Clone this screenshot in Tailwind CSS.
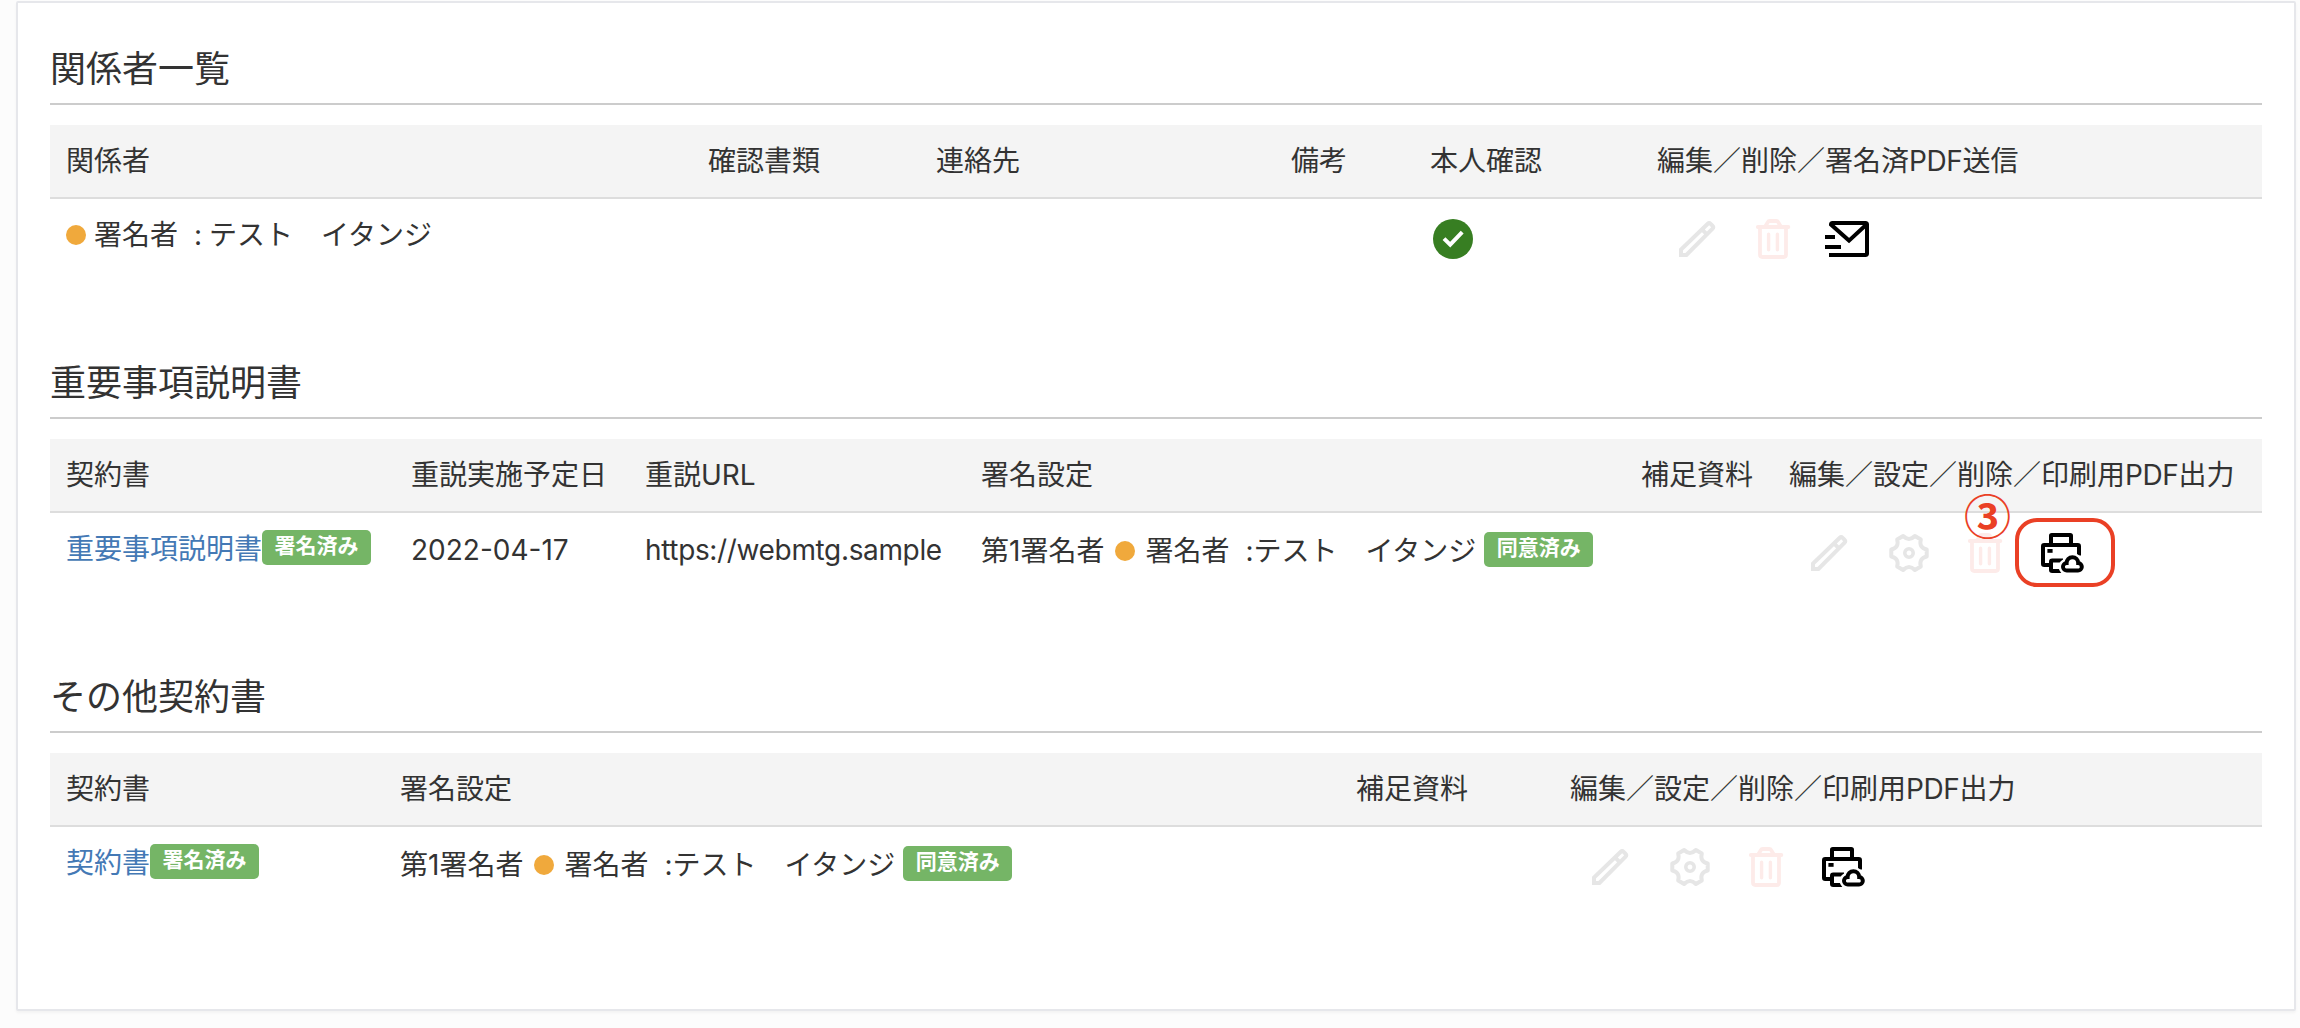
<!DOCTYPE html>
<html lang="ja">
<head>
<meta charset="utf-8">
<title>契約詳細</title>
<script src="https://cdn.jsdelivr.net/npm/@tailwindcss/browser@4"></script>
</head>
<body class="h-[1028px] overflow-hidden bg-[#fcfcfc] pl-4 pr-1 pt-px font-[Inter,'Noto_Sans_CJK_JP',sans-serif] text-[28px] leading-10 text-[#333]">
<svg class="hidden">
  <symbol id="pencil" viewBox="0 0 24 24"><path d="M4 20v-2.7L17.4 4.4q.7-.7 1.4 0l1 1q.7.7 0 1.4L6.7 20zM14.6 7.3l2.6 2.6" fill="none" stroke="currentColor" stroke-width="2"/></symbol>
  <symbol id="gear" viewBox="-12 -12 24 24"><g fill="none" stroke="currentColor" stroke-width="2" stroke-linejoin="round"><path d="M8.85 -1.72V1.72Q4.8 2.77 5.91 6.79L2.94 8.51Q0 5.54 -2.94 8.51L-5.91 6.79Q-4.8 2.77 -8.85 1.72V-1.72Q-4.8 -2.77 -5.91 -6.79L-2.94 -8.51Q0 -5.54 2.94 -8.51L5.91 -6.79Q4.8 -2.77 8.85 -1.72Z"/><circle r="2.1" stroke-width="1.8"/></g></symbol>
  <symbol id="trash" viewBox="0 0 24 24"><g fill="none" stroke="currentColor" stroke-width="1.9" stroke-linecap="round" stroke-linejoin="round"><path d="M4.4 6h15.3M8.2 5.6l1.2-2q.3-.6 1-.6h3.2q.7 0 1 .6l1.2 2M5.5 6.5v13.3q0 1.2 1.2 1.2h10.6q1.2 0 1.2-1.2V6.5"/><path d="M9.8 9.6v7.8M14.2 9.6v7.8" stroke-width="1.7"/></g></symbol>
  <symbol id="mail" viewBox="0 0 24 24"><path d="M3 20h18.2q.8 0 .8-.8V4.8q0-.8-.8-.8H4.8Q4 4 4 4.8L13 12.8 21.6 4.9M1 11h5M1 16h8" fill="none" stroke="currentColor" stroke-width="2"/></symbol>
  <symbol id="printer" viewBox="0 0 24 24"><g fill="none" stroke="currentColor" stroke-width="2"><path d="M7 8V3.4Q7 3 7.4 3h9.2q.4 0 .4.4V8M7 18H3.6Q3 18 3 17.4V8.6Q3 8 3.6 8h16.8q.6 0 .6.6v4.6M13 15.8H7.6q-.6 0-.6.6v4q0 .6.6.6H13"/><path d="M15 20.8a1.9 1.9 0 0 1-.2-3.8a2.9 2.9 0 0 1 5.8 0a1.9 1.9 0 0 1-.2 3.8z" fill="#fff" stroke="#fff" stroke-width="4.4"/><path d="M15 20.8a1.9 1.9 0 0 1-.2-3.8a2.9 2.9 0 0 1 5.8 0a1.9 1.9 0 0 1-.2 3.8z"/></g><path d="M5.2 10h2.6v1.9H5.2z" fill="currentColor"/></symbol>
  <symbol id="check" viewBox="0 0 24 24"><circle cx="12" cy="12" r="10" fill="currentColor"/><path d="M7.5 11.8l3.1 3 6-6.2" fill="none" stroke="#fff" stroke-width="2"/></symbol>
</svg>

<main class="h-[1010px] rounded-[2px] border-2 border-[#e6e7eb] bg-white px-8 shadow-[0_2px_3px_rgba(0,0,0,0.04)]">
  <section class="h-[314px] pt-[38px]">
    <h2 class="h-16 border-b-2 border-[#ccc] text-4xl leading-[56px]">関係者一覧</h2>
    <div class="mt-5 grid h-[74px] grid-cols-[642px_228px_355px_139px_227px_1fr] items-center border-b-2 border-[#ddd] bg-[#f4f4f4] whitespace-nowrap *:px-4">
      <div>関係者</div><div>確認書類</div><div>連絡先</div><div>備考</div><div>本人確認</div><div>編集／削除／署名済<span class="tracking-[-0.4px]">PDF</span>送信</div>
    </div>
    <div class="grid grid-cols-[642px_228px_355px_139px_227px_1fr] pt-4 whitespace-nowrap *:px-4">
      <div class="flex h-10 items-center"><i class="mr-2 size-5 rounded-full bg-[#f0a93c]"></i><span>署名者</span><span class="mr-[7px] ml-4 w-2 text-center">:</span><span>テスト　イタンジ</span></div>
      <div></div><div></div><div></div>
      <div><svg class="-ml-px size-12 text-[#377e22]"><use href="#check"/></svg></div>
      <div><div class="ml-4 flex gap-7">
        <svg class="size-12 text-[#e6e6e6]"><use href="#pencil"/></svg>
        <svg class="size-12 text-[#fdebe9]"><use href="#trash"/></svg>
        <svg class="-ml-0.5 size-12 text-black"><use href="#mail"/></svg>
      </div></div>
    </div>
  </section>

  <section class="h-[314px] pt-[38px]">
    <h2 class="h-16 border-b-2 border-[#ccc] text-4xl leading-[56px]">重要事項説明書</h2>
    <div class="mt-5 grid h-[74px] grid-cols-[345px_234px_336px_660px_148px_1fr] items-center border-b-2 border-[#ddd] bg-[#f4f4f4] whitespace-nowrap *:pl-4">
      <div>契約書</div><div>重説実施予定日</div><div>重説URL</div><div>署名設定</div><div>補足資料</div><div>編集／設定／削除／印刷用<span class="tracking-[-0.4px]">PDF</span>出力</div>
    </div>
    <div class="grid grid-cols-[345px_234px_336px_660px_148px_1fr] pt-4 whitespace-nowrap *:pl-4">
      <div class="flex h-10 items-center"><a class="text-[#4479b5]">重要事項説明書</a><span class="-mt-[3px] h-[35px] w-[109px] rounded-[5px] bg-[#75b566] text-center text-[21px] leading-8 font-bold text-white">署名済み</span></div>
      <div class="h-10 leading-[42px]">2022-04-17</div>
      <div class="h-10 leading-[42px] tracking-[-0.35px]">https://webmtg.sample</div>
      <div class="flex h-11 items-center"><span>第1署名者</span><i class="mr-2.5 ml-[11px] size-5 rounded-full bg-[#f0a93c]"></i><span>署名者</span><span class="ml-4 w-2 text-center">:</span><span>テスト　イタンジ</span><span class="-mt-1 ml-2 h-[35px] w-[109px] rounded-[5px] bg-[#75b566] text-center text-[21px] leading-8 font-bold text-white">同意済み</span></div>
      <div></div>
      <div><div class="ml-4 flex gap-7">
        <svg class="mr-1 size-12 text-[#e6e6e6]"><use href="#pencil"/></svg>
        <svg class="size-12 text-[#e6e6e6]"><use href="#gear"/></svg>
        <svg class="size-12 text-[#fdebe9]"><use href="#trash"/></svg>
        <div class="relative size-12">
          <svg class="size-12 text-black"><use href="#printer"/></svg>
          <div class="absolute -top-[11px] -left-[22px] h-[69px] w-[100px] rounded-[22px] border-4 border-[#ea4025]"></div>
          <span class="absolute -top-[39px] -left-[73px] font-['Noto_Sans_CJK_JP',sans-serif] text-[47px] leading-[47px] font-bold text-[#ea4025]">③</span>
        </div>
      </div></div>
    </div>
  </section>

  <section class="pt-[38px]">
    <h2 class="h-16 border-b-2 border-[#ccc] text-4xl leading-[56px]">その他契約書</h2>
    <div class="mt-5 grid h-[74px] grid-cols-[334px_956px_214px_1fr] items-center border-b-2 border-[#ddd] bg-[#f4f4f4] whitespace-nowrap *:pl-4">
      <div>契約書</div><div>署名設定</div><div>補足資料</div><div>編集／設定／削除／印刷用<span class="tracking-[-0.4px]">PDF</span>出力</div>
    </div>
    <div class="grid grid-cols-[334px_956px_214px_1fr] pt-4 whitespace-nowrap *:pl-4">
      <div class="flex h-10 items-center"><a class="text-[#4479b5]">契約書</a><span class="-mt-[3px] h-[35px] w-[109px] rounded-[5px] bg-[#75b566] text-center text-[21px] leading-8 font-bold text-white">署名済み</span></div>
      <div class="flex h-11 items-center"><span>第1署名者</span><i class="mr-2.5 ml-[11px] size-5 rounded-full bg-[#f0a93c]"></i><span>署名者</span><span class="ml-4 w-2 text-center">:</span><span>テスト　イタンジ</span><span class="-mt-1 ml-2 h-[35px] w-[109px] rounded-[5px] bg-[#75b566] text-center text-[21px] leading-8 font-bold text-white">同意済み</span></div>
      <div></div>
      <div><div class="ml-4 flex gap-7">
        <svg class="mr-1 size-12 text-[#e6e6e6]"><use href="#pencil"/></svg>
        <svg class="size-12 text-[#e6e6e6]"><use href="#gear"/></svg>
        <svg class="size-12 text-[#fdebe9]"><use href="#trash"/></svg>
        <svg class="size-12 text-black"><use href="#printer"/></svg>
      </div></div>
    </div>
  </section>
</main>
</body>
</html>
